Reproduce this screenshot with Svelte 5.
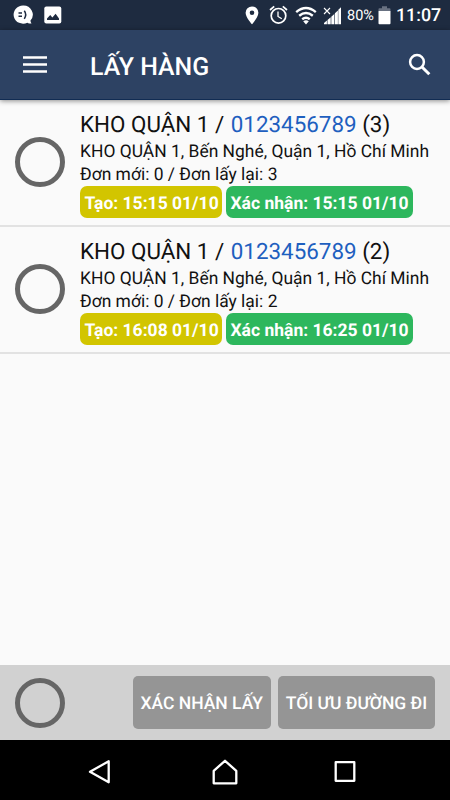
<script>
  const orders = [
    { name: 'KHO QUẬN 1', phone: '0123456789', count: 3, created: '15:15 01/10', confirmed: '15:15 01/10' },
    { name: 'KHO QUẬN 1', phone: '0123456789', count: 2, created: '16:08 01/10', confirmed: '16:25 01/10' }
  ];
</script>

<div class="screen">
  <div class="status">
    <svg class="chat" width="20" height="20" viewBox="0 0 20 20">
      <path fill="#fff" d="M10 .5a9.4 9.1 0 1 0 4.3 17.2c1.3.7 2.7.9 4.2.8-.8-.9-1.1-2-1-3A9.4 9.1 0 0 0 10 .5z" />
      <path d="M5.5 8h3.5M5.5 11.3h3.5M11.3 5.800q2.800 3.700 0 8" fill="none" stroke="#1e2b40" stroke-width="1.5" />
    </svg>
    <svg class="photo" width="18" height="18" viewBox="0 0 18 18">
      <rect x=".3" y=".4" width="17" height="17" rx="2" fill="#fff" />
      <path d="M3 14v-1.600l3.200-3.300 2.200 2.300 3.200-3.600 3.400 4.600V14z" fill="#1e2b40" />
    </svg>
    <span class="grow"></span>
    <svg class="pin" width="14" height="19" viewBox="0 0 14 19">
      <path fill="#fff" fill-rule="evenodd" d="M7 .5A6.400 6.200 0 0 0 .6 6.700C.6 11.200 7 18.300 7 18.300s6.400-7.100 6.400-11.600A6.400 6.200 0 0 0 7 .5zm0 4a2.300 2.300 0 1 1 0 4.600 2.300 2.300 0 0 1 0-4.600z" />
    </svg>
    <svg class="alarm" width="19" height="20" viewBox="0 0 19 20" fill="none" stroke="#fff">
      <circle cx="9.500" cy="10.800" r="7.300" stroke-width="1.700" />
      <path d="M1 5l4.200-3.600M18 5l-4.200-3.600" stroke-width="1.700" />
      <path d="M9 6.500v5l3.800 2.300" stroke-width="1.300" />
    </svg>
    <svg class="wifi" width="22" height="19" viewBox="0 0 22 19">
      <path d="M1.200 6.200q9.800-8.200 19.600 0M4.200 9.800q6.800-5.600 13.600 0M7.200 13.200q3.800-3 7.600 0" fill="none" stroke="#fff" stroke-width="2.400" />
      <path d="M8.200 15.200q2.800-1.700 5.600 0L11 18.600z" fill="#fff" />
    </svg>
    <svg class="signal" width="19" height="19" viewBox="0 0 19 19">
      <path fill="#fff" d="M1 18.300v-1.200L3.900 14.600v3.700zM4.500 18.300v-4.200l3.200-2.900v7.100zM8.300 18.300v-7.600l3-2.800v10.400zM11.900 18.300V7.200l3-2.800v13.900z" />
      <path fill="#fff" d="M15.300 18.300V3.800L18 1.200v17.100z" />
      <path d="M1 2l6 6M7 2L1 8" stroke="#fff" stroke-width="1.100" />
    </svg>
    <span class="percent">80%</span>
    <svg class="battery" width="13" height="19" viewBox="0 0 13 19">
      <path d="M.5 5V3.200q0-.9.900-.9H4V.3h5v2h2.600q.9 0 .9.900V5z" fill="#687181" />
      <path d="M.5 5h12v12.300q0 .9-.9.900H1.400q-.9 0-.9-.9z" fill="#fff" />
    </svg>
    <span class="clock">11:07</span>
  </div>

  <header>
    <svg class="menu" width="24" height="18" viewBox="0 0 24 18">
      <path d="M0 1.500h24M0 8.500h24M0 15.500h24" stroke="#fff" stroke-width="2.700" />
    </svg>
    <h1>LẤY HÀNG</h1>
    <svg class="search" width="24" height="24" viewBox="0 0 24 24" fill="none" stroke="#fff">
      <circle cx="9" cy="9" r="6.900" stroke-width="2.500" />
      <path d="M14 14l7.300 7.300" stroke-width="3" />
    </svg>
  </header>

  <main>
    {#each orders as order}
      <article>
        <span class="radio"></span>
        <div class="info">
          <div class="name">{order.name} / <span class="phone">{order.phone}</span> ({order.count})</div>
          <div class="address">KHO QUẬN 1, Bến Nghé, Quận 1, Hồ Chí Minh</div>
          <div class="totals">Đơn mới: 0 / Đơn lấy lại: {order.count}</div>
          <div class="chips">
            <span class="chip created">Tạo: {order.created}</span>
            <span class="chip confirmed">Xác nhận: {order.confirmed}</span>
          </div>
        </div>
      </article>
    {/each}
  </main>

  <footer>
    <span class="radio"></span>
    <span class="grow"></span>
    <button class="confirm">XÁC NHẬN LẤY</button>
    <button class="route">TỐI ƯU ĐƯỜNG ĐI</button>
  </footer>

  <nav>
    <svg width="24" height="26" viewBox="0 0 24 26"><path d="M20.700 2.300v21L2 12.800z" /></svg>
    <svg class="home" width="26" height="26" viewBox="0 0 26 26"><path d="M1.700 24.300V11.800L13 1.800l11.300 10v12.500z" /></svg>
    <svg width="22" height="22" viewBox="0 0 22 22"><path d="M1.700 1.200h18.600v18.600H1.700z" /></svg>
  </nav>
</div>

<style>
  :global(body) { margin: 0; }
  .screen {
    width: 450px;
    height: 800px;
    display: flex;
    flex-direction: column;
    background: #fafafa;
    color: #111;
    font-family: Roboto, 'Liberation Sans', sans-serif;
    text-rendering: geometricPrecision;
    overflow: hidden;
  }
  svg { display: block; flex: none; }
  .grow { flex: 1; }
  .status {
    height: 30px;
    flex: none;
    box-sizing: border-box;
    padding: 0 10px 0 13px;
    display: flex;
    align-items: center;
    background: #1e2b40;
    color: #fff;
    white-space: nowrap;
  }
  .photo { margin-left: 11px; }
  .alarm { margin-left: 10px; }
  .wifi { margin-left: 7px; }
  .signal { margin-left: 6px; }
  .percent { width: 27px; margin-left: 5.500px; padding-top: 1px; font-size: 14.500px; line-height: 24px; }
  .battery { margin-left: 4px; }
  .clock { width: 44px; margin-left: 5px; padding-top: 2px; font-size: 17.800px; font-weight: 500; line-height: 24px; }
  header {
    height: 70px;
    flex: none;
    box-sizing: border-box;
    padding: 0 18px 0 23px;
    display: flex;
    align-items: center;
    background: #2d4263;
    border-bottom: 1px solid #112c53;
    box-shadow: 0 1px 5px rgba(0, 0, 0, .45);
    position: relative;
    color: #fff;
  }
  h1 { flex: 1; margin: 6px 0 0 43px; font-size: 24.900px; font-weight: 500; line-height: 32px; }
  main { flex: 1; }
  article {
    height: 127px;
    box-sizing: border-box;
    display: flex;
    padding: 10px 0 0 15px;
    border-bottom: 2px solid #e2e2e2;
  }
  .radio {
    width: 50px;
    height: 50px;
    flex: none;
    box-sizing: border-box;
    border: 5px solid #666;
    border-radius: 50%;
  }
  article .radio { margin-top: 27px; }
  .info { margin: 1px 0 0 15px; white-space: nowrap; }
  .name { font-size: 22.400px; line-height: 29px; }
  .phone { margin-left: 1px; color: #1e5fbf; }
  .address { font-size: 17.450px; line-height: 24px; }
  .totals { font-size: 17.450px; line-height: 23px; }
  .chips { display: flex; gap: 4px; margin-top: -1px; }
  .chip {
    height: 32px;
    box-sizing: border-box;
    padding: 0 4.500px;
    border-radius: 7px;
    color: #fff;
    font-size: 17.500px;
    font-weight: 700;
    line-height: 36px;
  }
  .created { width: 142px; background: #d2c500; }
  .confirmed { width: 187px; background: #2db75d; }
  footer {
    height: 75px;
    flex: none;
    box-sizing: border-box;
    padding: 0 15px;
    display: flex;
    align-items: center;
    background: #d1d1d1;
  }
  button {
    height: 53px;
    padding: 2px 0 0;
    border: 0;
    border-radius: 5px;
    background: #959595;
    color: #fff;
    font: 500 17.500px/24px Roboto, 'Liberation Sans', sans-serif;
    text-rendering: geometricPrecision;
    white-space: nowrap;
  }
  .confirm { width: 138.500px; margin-right: 7px; }
  .route { width: 157px; }
  nav {
    height: 60px;
    flex: none;
    box-sizing: border-box;
    padding: 4px 94px 0 88px;
    display: flex;
    align-items: center;
    background: #000;
  }
  .home { margin: 0 auto 0 100px; }
  nav path { fill: none; stroke: #fff; stroke-width: 2.300; stroke-linejoin: round; }
</style>
